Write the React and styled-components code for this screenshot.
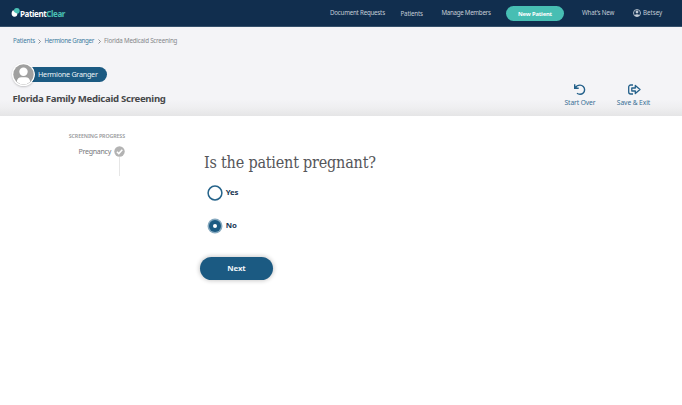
import React from 'react';
import styled, { createGlobalStyle } from 'styled-components';

const GlobalStyle = createGlobalStyle`
  * { box-sizing: border-box; }
  body {
    margin: 0;
    background: #fff;
    font-family: "Noto Sans", "Open Sans", sans-serif;
    overflow: hidden;
  }
  button { border: 0; padding: 0; background: none; font-family: inherit; cursor: pointer; }
  a { text-decoration: none; color: inherit; }
`;

const Page = styled.div`
  width: 682px;
  height: 405px;
  background: #fff;
`;

const TopBar = styled.header`
  height: 27px;
  display: flex;
  align-items: flex-start;
  background: #112e4e;
  border-bottom: 1px solid #35506b;
`;

const Brand = styled.a`
  display: flex;
  margin-left: 11px;
  padding-top: 7px;
  width: 319px;
  svg { flex: none; }
`;

const BrandName = styled.span`
  margin: 2px 0 0;
  font: 700 8px/10px "Noto Sans", sans-serif;
  letter-spacing: -0.4px;
  color: #fff;
  em { font-style: normal; color: #4bc1b5; }
`;

const NavLink = styled.a`
  width: ${(p) => p.$width}px;
  margin-top: ${(p) => p.$drop || 8}px;
  font-size: 6.2px;
  line-height: 10px;
  letter-spacing: ${(p) => p.$track || 0}px;
  white-space: nowrap;
  color: #c3ccd6;
`;

const NewPatient = styled.button`
  flex: none;
  width: 58px;
  height: 15px;
  margin: 6px 18px 0 0;
  padding-top: 1px;
  border-radius: 8px;
  background: #47beb3;
  color: #fff;
  font-size: 5.8px;
  letter-spacing: -0.15px;
  line-height: 14px;
  font-weight: 700;
`;

const UserIcon = styled.svg`
  flex: none;
  margin: 9px 2px 0 0;
`;

const SubHeader = styled.section`
  height: 89px;
  padding: 9px 0 0 13px;
  background: linear-gradient(#f4f4f7 0 81%, #efeff1 90%, #e5e5e6);
`;

const Breadcrumbs = styled.nav`
  display: flex;
  height: 10px;
  font-size: 6.2px;
  line-height: 10px;
  color: #85878b;
  white-space: nowrap;
`;

const Crumb = styled.span`
  width: ${(p) => p.$width}px;
  letter-spacing: ${(p) => p.$track || 0}px;
  color: ${(p) => (p.$current ? '#85878b' : '#437c9f')};
`;

const Separator = styled.svg`
  flex: none;
  margin: 3px 3.5px 0 3px;
`;

const HeaderBody = styled.div`
  display: flex;
  justify-content: space-between;
  padding-top: 16px;
`;

const PatientTag = styled.div`
  display: flex;
  align-items: center;
  height: 24px;
  margin-left: -1px;
`;

const Avatar = styled.svg`
  flex: none;
  z-index: 1;
  border-radius: 50%;
  box-shadow: 0 1px 2px rgba(0, 0, 0, 0.2);
`;

const PatientName = styled.span`
  width: 78px;
  height: 15px;
  margin-left: -6px;
  padding-left: 9px;
  border-radius: 0 8px 8px 0;
  background: #1b5a82;
  color: #eaf1f5;
  font-size: 7.2px;
  line-height: 15px;
  letter-spacing: -0.25px;
  white-space: nowrap;
`;

const Title = styled.h1`
  margin: 6px 0 0 -0.5px;
  font-size: 9.6px;
  line-height: 14px;
  font-weight: 700;
  letter-spacing: -0.29px;
  color: #47484a;
  white-space: nowrap;
`;

const Actions = styled.div`
  display: flex;
  gap: 20px;
  padding: 21px 31px 0 0;
`;

const Action = styled.button`
  display: flex;
  flex-direction: column;
  align-items: center;
  width: ${(p) => p.$width}px;
  color: #386f94;
  font-size: 6.7px;
  line-height: 10px;
  letter-spacing: ${(p) => p.$track || 0}px;
  white-space: nowrap;
  svg { display: block; margin-bottom: 2px; }
`;

const Main = styled.main`
  display: flex;
`;

const Progress = styled.aside`
  width: 125px;
  padding-top: 16px;
  display: flex;
  flex-direction: column;
  align-items: flex-end;
`;

const ProgressTitle = styled.h2`
  margin: 0;
  font-size: 5.3px;
  line-height: 8px;
  font-weight: 600;
  letter-spacing: -0.1px;
  color: #97999b;
  white-space: nowrap;
`;

const Step = styled.div`
  display: flex;
  align-items: center;
  margin-top: 5.5px;
  height: 11px;
  font-size: 7.1px;
  letter-spacing: -0.3px;
  color: #77797b;
  svg { margin-left: 3px; }
`;

const StepName = styled.span`
  margin-top: -1px;
`;

const StepLine = styled.div`
  width: 1px;
  height: 19.5px;
  margin-right: 5px;
  background: #e6e6e6;
`;

const Form = styled.form`
  padding: 36px 0 0 79px;
`;

const Question = styled.h3`
  margin: 0;
  font: 400 16px/22px "DejaVu Serif Condensed", "DejaVu Serif", serif;
  font-stretch: condensed;
  letter-spacing: -0.2px;
  color: #55565a;
  white-space: nowrap;
`;

const Option = styled.label`
  display: flex;
  align-items: center;
  height: 16px;
  margin: ${(p) => p.$gap}px 0 0 2.5px;
  color: #173653;
  font-size: 7.8px;
  font-weight: 700;
  line-height: 16px;
  letter-spacing: -0.2px;
`;

const OptionText = styled.span`
  margin: -2px 0 0 3.3px;
`;

const Radio = styled.svg`
  flex: none;
`;

const Next = styled.button`
  display: block;
  width: 73px;
  height: 23px;
  margin: 23px 0 0 -4px;
  padding-bottom: 1px;
  border-radius: 12px;
  background: #1b5a82;
  box-shadow: 0 0 4px 1px rgba(0, 0, 0, 0.2);
  color: #eef4f8;
  font-size: 7.8px;
  line-height: 22px;
  font-weight: 700;
  letter-spacing: -0.1px;
`;

function Chevron() {
  return (
    <Separator width="3" height="5" viewBox="0 0 3 5" fill="none" stroke="#77797e" strokeWidth=".8">
      <path d="M.5.5l2 2-2 2" />
    </Separator>
  );
}

export default function App() {
  return (
    <Page>
      <GlobalStyle />
      <TopBar>
        <Brand href="#">
          <svg width="9" height="10" viewBox="0 0 9 10">
            <circle cx="5.8" cy="3.8" r="2.9" fill="#4bc1b5" />
            <path d="M1.2 4.2Q1.5 3.2 2.6 3.2 3 5.8 6.4 6.4 6.3 9.7 3.5 9.7.6 9.6.6 6.5.6 5 1.2 4.2Z" fill="#fff" />
          </svg>
          <BrandName>Patient<em>Clear</em></BrandName>
        </Brand>
        <NavLink href="#" $width={70.5} $track={-0.22}>Document Requests</NavLink>
        <NavLink href="#" $width={41} $drop={9} $track={-0.14}>Patients</NavLink>
        <NavLink href="#" $width={64.5} $track={-0.28}>Manage Members</NavLink>
        <NewPatient>New Patient</NewPatient>
        <NavLink href="#" $width={51} $track={-0.16}>What’s New</NavLink>
        <UserIcon width="8" height="8" viewBox="0 0 24 24" fill="#c3ccd6">
          <circle cx="12" cy="12" r="10.5" fill="none" stroke="#c3ccd6" strokeWidth="2.6" />
          <circle cx="12" cy="9" r="4.2" />
          <path d="M4 19.500Q7 15.500 12 15.500T20 19.500Q16.500 23 12 23T4 19.500Z" />
        </UserIcon>
        <NavLink href="#" $width={30}>Betsey</NavLink>
      </TopBar>

      <SubHeader>
        <Breadcrumbs>
          <Crumb $width={22} $track={-0.2}>Patients</Crumb>
          <Chevron />
          <Crumb $width={50} $track={-0.33}>Hermione Granger</Crumb>
          <Chevron />
          <Crumb $width={75} $track={-0.2} $current>Florida Medicaid Screening</Crumb>
        </Breadcrumbs>
        <HeaderBody>
          <div>
            <PatientTag>
              <Avatar width="23" height="23" viewBox="0 0 23 23">
                <circle cx="11.5" cy="11.5" r="11.5" fill="#fff" />
                <circle cx="11.5" cy="11.5" r="10.2" fill="#a0a0a0" />
                <circle cx="11.5" cy="8.8" r="4.2" fill="#fff" />
                <path d="M4.7 18.8C5.2 15.5 7 14.2 9.3 14.2h4.4c2.3 0 4.1 1.3 4.6 4.6a10 10 0 01-13.6 0Z" fill="#fff" />
              </Avatar>
              <PatientName>Hermione Granger</PatientName>
            </PatientTag>
            <Title>Florida Family Medicaid Screening</Title>
          </div>
          <Actions>
            <Action $width={32} $track={-0.1}>
              <svg width="13" height="13" viewBox="0 0 13 13" fill="none" stroke="#23608a" strokeWidth="1.4">
                <path d="M.7 1.200v4h4M1.300 4.800Q2.800 2.100 6 2.100A4.600 4.600 0 116 11.300Q4.200 11.300 3 10.300" />
              </svg>
              Start Over
            </Action>
            <Action $width={35} $track={-0.1}>
              <svg width="14" height="13" viewBox="0 0 14 13" fill="none" stroke="#23608a" strokeWidth="1.3" strokeLinejoin="round">
                <path d="M6 2H3.700A2 2 0 001.700 4v5a2 2 0 002 2H6" />
                <path d="M4.800 5h3.500V2.500l4.700 4-4.700 4V8H4.800z" />
              </svg>
              Save &amp; Exit
            </Action>
          </Actions>
        </HeaderBody>
      </SubHeader>

      <Main>
        <Progress>
          <ProgressTitle>SCREENING PROGRESS</ProgressTitle>
          <Step>
            <StepName>Pregnancy</StepName>
            <svg width="11" height="11" viewBox="0 0 11 11">
              <circle cx="5.5" cy="5.5" r="5.2" fill="#b3b3b3" />
              <path d="M2.9 5.7l1.9 1.9 3.5-3.8" fill="none" stroke="#fff" strokeWidth="1.5" />
            </svg>
          </Step>
          <StepLine />
        </Progress>
        <Form>
          <Question>Is the patient pregnant?</Question>
          <Option $gap={11}>
            <Radio width="16" height="16" viewBox="0 0 16 16">
              <circle cx="8" cy="8" r="6.9" fill="#fff" stroke="#25638a" strokeWidth="1.5" />
            </Radio>
            <OptionText>Yes</OptionText>
          </Option>
          <Option $gap={16.6}>
            <Radio width="16" height="16" viewBox="0 0 16 16">
              <circle cx="8" cy="8" r="7.5" fill="#86a9bf" />
              <circle cx="8" cy="8" r="6" fill="#1b5a82" />
              <circle cx="8" cy="8" r="2" fill="#fff" />
            </Radio>
            <OptionText>No</OptionText>
          </Option>
          <Next type="button">Next</Next>
        </Form>
      </Main>
    </Page>
  );
}
